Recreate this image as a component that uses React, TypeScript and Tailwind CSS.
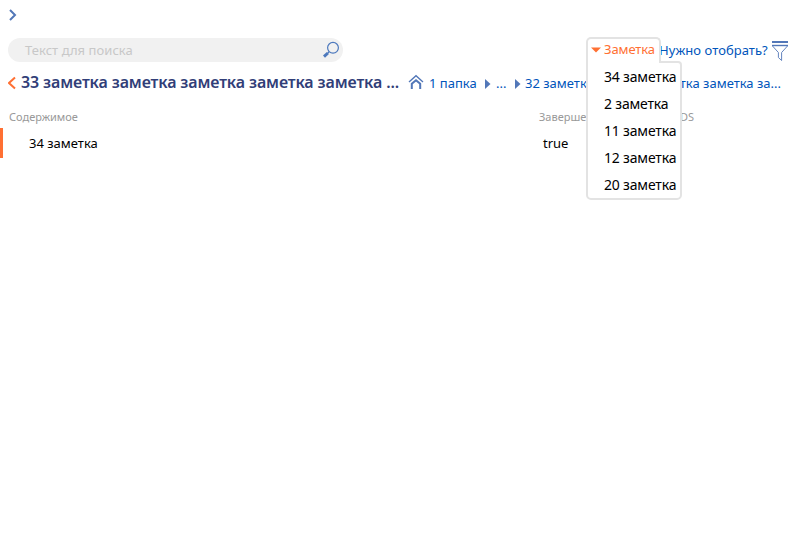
import React from 'react';

const Home = () => (
  <svg className="mb-[4px]" width="16" height="16" viewBox="0 0 16 16" fill="none" stroke="#5277b8">
    <path d="M1 8 L8 1.8 L15 8" strokeWidth="1.4" />
    <path d="M3.8 15 V9.8 L8 6.2 L12.2 9.8 V15" strokeWidth="2" />
  </svg>
);

const Arrow = () => (
  <svg width="6" height="10" viewBox="0 0 6 10" fill="#5277b8">
    <path d="M0 0 L5.5 5 L0 10Z" />
  </svg>
);

const Search = () => (
  <svg width="18" height="18" viewBox="0 0 18 18" fill="none" stroke="#4d79bd">
    <circle cx="11" cy="6.8" r="5.4" strokeWidth="1.2" />
    <path d="M7 10.8 L5.8 12" strokeWidth="1.5" />
    <path d="M5.9 12 L2 15.6" strokeWidth="3" />
  </svg>
);

const Filter = () => (
  <svg width="18" height="22" viewBox="0 0 18 22" fill="none" stroke="#5277b8">
    <path d="M1 2 H17" strokeWidth="2" />
    <path d="M1 5.5 H17" strokeWidth="1.4" />
    <path d="M1.5 6 L7.4 12.5 V17.5 L10.6 20.5 V12.5 L16.5 6" strokeWidth="0.9" />
  </svg>
);

const items = ['34 заметка', '2 заметка', '11 заметка', '12 заметка', '20 заметка'];

export default function App() {
  return (
    <div className="relative h-[550px] w-[800px] overflow-hidden bg-white font-['Noto_Sans','Liberation_Sans',sans-serif] text-[13px] whitespace-nowrap text-black">
      <div className="flex h-[38px] pt-[9px] pl-[9px]">
        <svg width="8" height="12" viewBox="0 0 8 12" fill="none" stroke="#5277b8" strokeWidth="2">
          <path d="M1 1 L6 6 L1 11" />
        </svg>
      </div>

      <header className="flex h-6 pl-2">
        <div className="flex h-6 w-[335px] items-center justify-between rounded-[12px] bg-[#f1f1f1] pr-[3px] pl-[17px]">
          <span className="pt-[2px] text-[13px] tracking-[0.05px] text-[#c8c8c8]">Текст для поиска</span>
          <Search />
        </div>
        <div className="ml-[316px] flex">
          <span className="w-[112px] text-[13px] leading-6 tracking-[0.05px] text-[#0055bb]">Нужно отобрать?</span>
          <div className="pt-[2px]"><Filter /></div>
        </div>
      </header>

      <div className="flex h-[42px] items-center pl-2">
        <svg width="9" height="14" viewBox="0 0 9 14" fill="none" stroke="#ff7033" strokeWidth="2">
          <path d="M7 1.5 L1 7 L7 12.5" />
        </svg>
        <h1 className="ml-1 w-[387px] pb-[2px] text-[16px] font-semibold tracking-[-0.13px] text-[#313e78]">33 заметка заметка заметка заметка заметка ...</h1>
        <nav className="flex w-[373px] items-center pt-[1px] text-[13px] text-[#0055bb]">
          <Home />
          <span className="ml-[5px] w-[56px] pt-[1px]">1 папка</span>
          <Arrow />
          <span className="ml-[5px] w-[19px] pt-[1px]">...</span>
          <Arrow />
          <span className="ml-[4px] w-[78px] pt-[1px]">32 заметка</span>
          <Arrow />
          <span className="flex flex-1 justify-end pt-[1px]">заметка заметка за...</span>
        </nav>
      </div>

      <div className="flex h-6 items-center pt-[2px] pl-[9px] text-[11px] leading-[22px] text-[#999]">
        <span className="w-[530px]">Содержимое</span>
        <span className="w-[141px]">Завершено</span>
        <span>DS</span>
      </div>
      <div className="flex h-[30px] items-center border-l-[3px] border-[#ff7033] pt-[2px] pl-[26px]">
        <span className="w-[514px]">34 заметка</span>
        <span>true</span>
      </div>

      <div className="absolute top-[37px] left-[586px] w-[96px]">
        <div className="relative z-10 flex h-[26px] w-[75px] items-center rounded-t-[5px] border-2 border-b-0 border-[#e3e3e3] bg-white pb-[2px] pl-[3px] text-[13px] text-[#ff7033]">
          <svg width="10" height="6" viewBox="0 0 10 6" fill="#ff7033"><path d="M0 0.5 H10 L5 5.5Z" /></svg>
          <span className="ml-[3px] tracking-[-0.1px]">Заметка</span>
        </div>
        <ul className="-mt-[2px] h-[139px] rounded-b-[5px] rounded-tr-[4px] border-2 border-[#e3e3e3] bg-white pl-4 text-[14px] leading-[27px] tracking-[-0.18px]">
          {items.map((t) => <li key={t}>{t}</li>)}
        </ul>
      </div>
    </div>
  );
}
